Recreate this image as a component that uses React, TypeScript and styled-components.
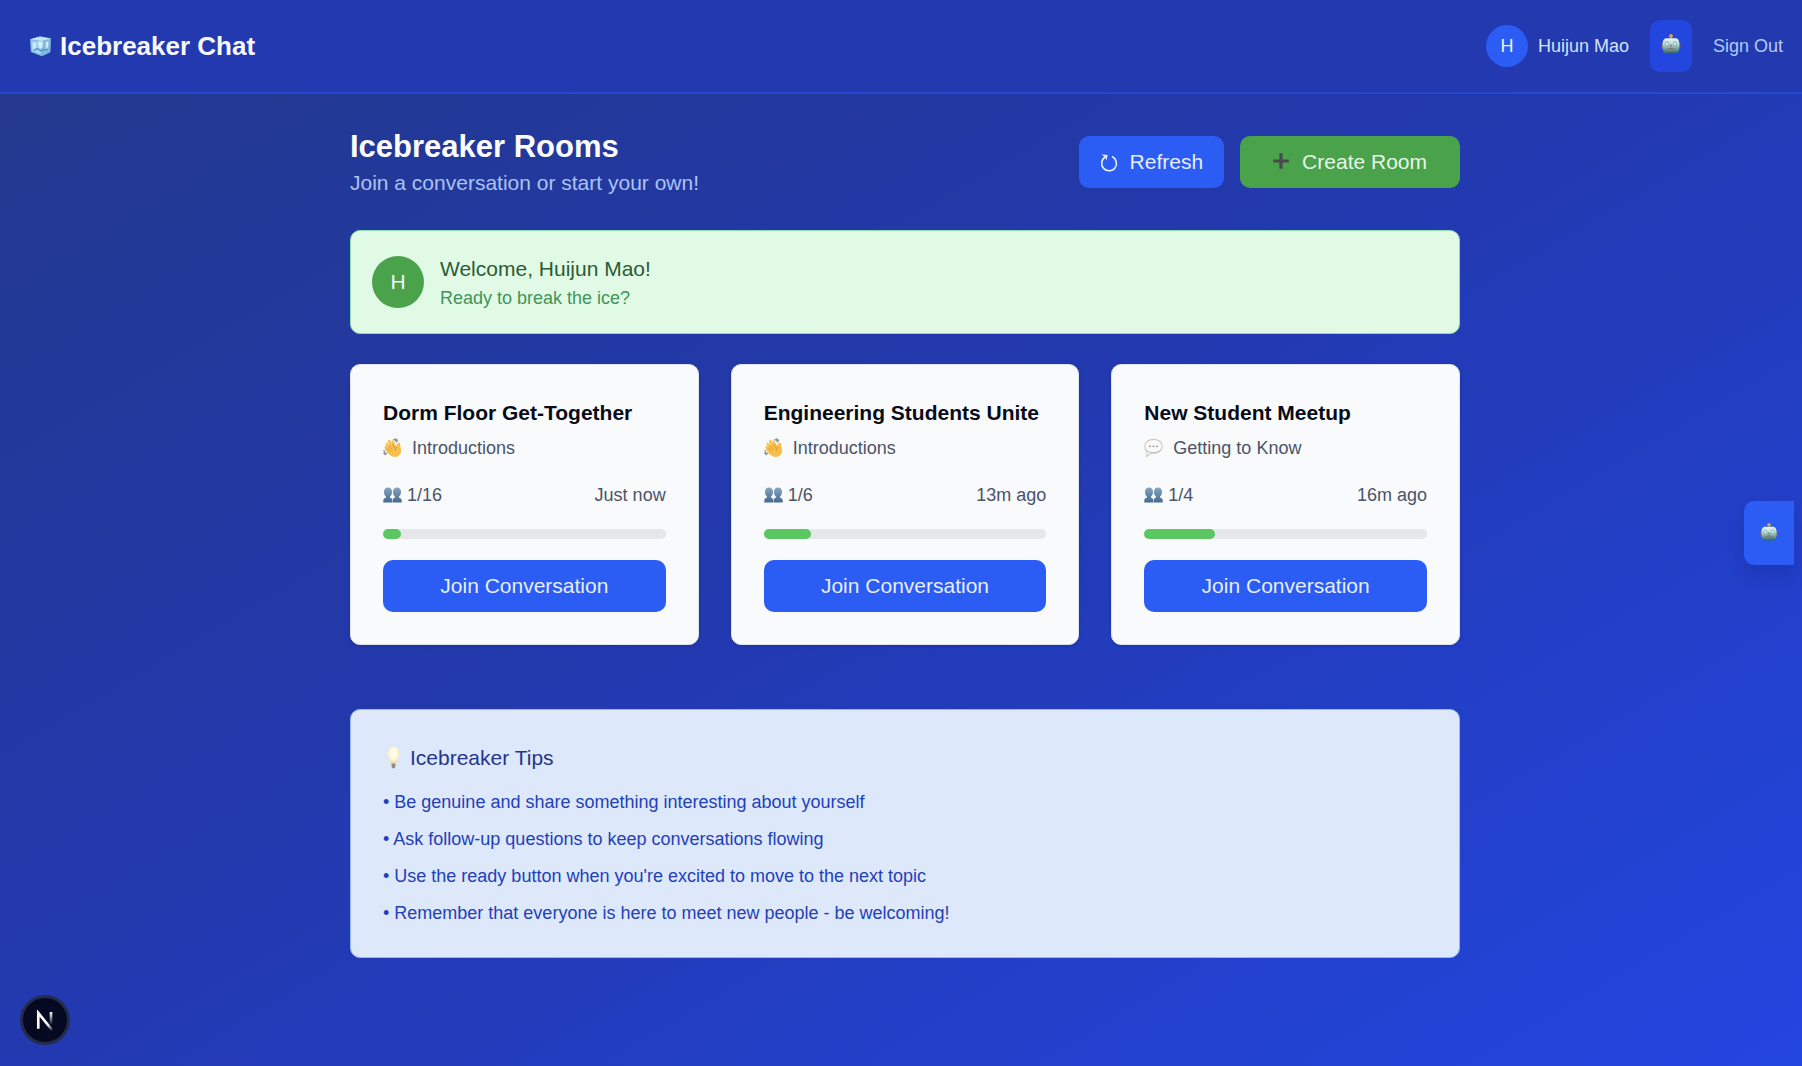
import React from "react";
import styled, { createGlobalStyle } from "styled-components";

const GlobalStyle = createGlobalStyle`
  *, *::before, *::after { box-sizing: border-box; }
  body {
    margin: 0;
    font-family: "Liberation Sans", Arial, Helvetica, sans-serif;
    font-size: 21px;
    line-height: 32px;
  }
  h1, h2, h3, p, ul { margin: 0; padding: 0; }
  button { font: inherit; border: 0; cursor: pointer; }
  svg { display: block; flex: none; }
`;

const Page = styled.div`
  min-height: 100vh;
  display: flex;
  flex-direction: column;
  background: linear-gradient(to bottom right, #23388a, #2239b1 50%, #2346e0);
`;

const TopBar = styled.header`
  display: flex;
  align-items: center;
  justify-content: space-between;
  padding: 20px 19px 20px 29px;
  background: #2239b0;
  border-bottom: 2px solid #2449cf;
`;

const Brand = styled.div`
  display: flex;
  align-items: center;
  gap: 8px;
  color: #f7f9ff;
  font-size: 26px;
  font-weight: 700;
`;

const Account = styled.div`
  display: flex;
  align-items: center;
  gap: 21px;
  font-size: 18px;
`;

const User = styled.div`
  display: flex;
  align-items: center;
  gap: 10px;
  color: #d5e1fc;
`;

const Avatar = styled.span<{ $size: number; $color: string }>`
  display: flex;
  align-items: center;
  justify-content: center;
  flex: none;
  width: ${(p) => p.$size}px;
  height: ${(p) => p.$size}px;
  border-radius: 50%;
  background: ${(p) => p.$color};
  color: #eef3ff;
`;

const BotButton = styled.button`
  display: flex;
  align-items: center;
  justify-content: center;
  width: 42px;
  height: 52px;
  padding: 0 0 4px;
  border-radius: 10px;
  background: #2346de;
`;

const SignOut = styled.button`
  padding: 0;
  background: none;
  color: #b4caf8;
`;

const Main = styled.main`
  padding: 32px 0 32px 8px;
`;

const Container = styled.div`
  max-width: 1110px;
  margin: 0 auto;
`;

const Heading = styled.div`
  display: flex;
  align-items: center;
  justify-content: space-between;
  margin-bottom: 32px;
`;

const Title = styled.h1`
  color: #fcfdff;
  font-size: 31px;
  line-height: 42px;
`;

const Subtitle = styled.p`
  color: #abc3f5;
  line-height: 30px;
`;

const Actions = styled.div`
  display: flex;
  gap: 16px;
`;

const Button = styled.button<{ $tone?: "green"; $padding?: number; $gap?: number }>`
  display: flex;
  align-items: center;
  justify-content: center;
  gap: ${(p) => p.$gap ?? 0}px;
  height: 52px;
  padding: 0 ${(p) => p.$padding ?? 21}px;
  border-radius: 10px;
  background: ${(p) => (p.$tone === "green" ? "#4aa24a" : "#2b5cf4")};
  color: ${(p) => (p.$tone === "green" ? "#e6f7e8" : "#e6eeff")};
`;

const Welcome = styled.section`
  display: flex;
  align-items: center;
  gap: 16px;
  margin-bottom: 30px;
  padding: 22px 21px;
  border: 1px solid #8fdcae;
  border-radius: 10px;
  background: #e0fae6;
  color: #2c5b34;
`;

const Small = styled.p<{ $color: string }>`
  color: ${(p) => p.$color};
  font-size: 18px;
  line-height: 26px;
`;

const Rooms = styled.section`
  display: grid;
  grid-template-columns: repeat(3, 1fr);
  gap: 32px;
  margin-bottom: 64px;
`;

const Card = styled.article`
  display: flex;
  flex-direction: column;
  gap: 21px;
  padding: 32px;
  border: 1px solid #dfe4ee;
  border-radius: 10px;
  background: #f9fafc;
  box-shadow: 0 1px 3px rgba(10, 20, 90, 0.2);
`;

const RoomName = styled.h2`
  margin-bottom: 6px;
  color: #080b18;
  font-size: 21px;
`;

const Line = styled.div<{ $gap: number }>`
  display: flex;
  align-items: center;
  gap: ${(p) => p.$gap}px;
`;

const Meta = styled.div`
  display: flex;
  justify-content: space-between;
`;

const Track = styled.div`
  height: 10px;
  border-radius: 5px;
  background: #e5e7eb;
`;

const Fill = styled.div`
  height: 100%;
  border-radius: 5px;
  background: #5bc760;
`;

const Tips = styled.section`
  padding: 32px;
  border: 1px solid #93b8fa;
  border-radius: 10px;
  background: #dde8fb;
`;

const TipsTitle = styled.h3`
  display: flex;
  align-items: center;
  gap: 6px;
  margin-bottom: 16px;
  color: #24368a;
  font-size: 21px;
  font-weight: 400;
`;

const TipList = styled.ul`
  display: flex;
  flex-direction: column;
  gap: 13px;
  list-style: none;
  color: #2340b8;
  font-size: 18px;
  line-height: 24px;
`;

const SideTab = styled.button`
  position: fixed;
  top: 50%;
  right: 8px;
  transform: translateY(-50%);
  display: flex;
  align-items: center;
  justify-content: center;
  width: 50px;
  height: 64px;
  padding: 0 0 2px;
  border-radius: 10px 0 0 10px;
  background: #2b5cf4;
  box-shadow: 0 10px 16px rgba(15, 25, 120, 0.22);
`;

const DevBadge = styled.button`
  position: fixed;
  left: 20px;
  bottom: 21px;
  display: flex;
  align-items: center;
  justify-content: center;
  width: 50px;
  height: 50px;
  padding: 0;
  border: 3px solid #252b4a;
  border-radius: 50%;
  background: #050a22;
`;

const IceIcon = () => (
  <svg width="23" height="21" viewBox="0 0 23 21" aria-hidden="true">
    <path d="M1 3.200 11 .6l11 2-.6 13.600L13 20.200 1.800 16z" fill="#7db6dd" />
    <path d="M1 3.200 11 .6l11 2L12.500 5z" fill="#c3e6f2" />
    <path d="M2.200 4.600 12 6.300v12.500L3 15.200z" fill="#a5d4ee" />
    <path d="M13 6.300l8-2.600-.5 11.600-7.500 3.700z" fill="#82bbdf" />
    <path d="M4 6.500l2.500.5v5l-2 1.500zM9 5.500h5l-.6 6-3 1.500zM17 6l2.500-1-.3 6-2.400 1.500z" fill="#dcf4fb" opacity=".85" />
    <path d="M4.500 14.500l4-2 3.500 2.500 3-1.500 4 .5" fill="none" stroke="#4c8fc4" strokeWidth="1.200" />
  </svg>
);

const BotIcon = ({ size = 20 }: { size?: number }) => (
  <svg width={size} height={size} viewBox="0 0 20 20" aria-hidden="true">
    <defs>
      <linearGradient id="botFace" x1="0" y1="0" x2="0" y2="1">
        <stop offset="0" stopColor="#f3f5ee" />
        <stop offset=".35" stopColor="#c6dad4" />
        <stop offset=".7" stopColor="#71a09f" />
        <stop offset="1" stopColor="#2f5f66" />
      </linearGradient>
    </defs>
    <path d="M9.200 2.500h1.600v2.500H9.200z" fill="#8c7a6a" />
    <circle cx="10" cy="2" r="1.900" fill="#e2a044" />
    <rect x=".5" y="9" width="2.300" height="5.500" rx="1.100" fill="#8e5146" />
    <rect x="17.200" y="9" width="2.300" height="5.500" rx="1.100" fill="#8e5146" />
    <path d="M5.200 4.200h9.600c2.300.2 3.700 2.600 3.700 6.300 0 4.900-.9 9-3.300 9H4.800c-2.400 0-3.300-4.100-3.300-9 0-3.700 1.400-6.100 3.700-6.300z" fill="url(#botFace)" />
    <circle cx="6" cy="9.600" r="2.300" fill="#7fc4c6" />
    <circle cx="14" cy="9.600" r="2.300" fill="#7fc4c6" />
    <circle cx="6" cy="9.600" r="1.200" fill="#d4f6f4" />
    <circle cx="14" cy="9.600" r="1.200" fill="#d4f6f4" />
    <path d="M10 10.200l1.500 2.400h-3z" fill="#b9604f" />
    <path d="M6.500 15.500c1.500-1.600 5.500-1.600 7 0" fill="none" stroke="#8a6a62" strokeWidth="1" />
  </svg>
);

const RefreshIcon = () => (
  <svg width="18" height="22" viewBox="0 0 18 22" aria-hidden="true">
    <path d="M12 5.600A7.400 7.400 0 1 1 5.300 6" fill="none" stroke="#e6eeff" strokeWidth="1.600" />
    <path d="M1.400 3.400l6.300.5-1.200 5.700-1.200-3.300z" fill="#e6eeff" />
  </svg>
);

const PlusIcon = () => (
  <svg width="16" height="22" viewBox="0 0 16 22" aria-hidden="true">
    <path d="M6.400 2.200h3.200v6.200h6.200v3.200H9.600v6.200H6.400v-6.200H.2V8.400h6.200z" fill="#46494f" />
  </svg>
);

const WaveIcon = () => (
  <svg width="19" height="20" viewBox="0 0 19 20" aria-hidden="true">
    <g fill="none" stroke="#8d949c" strokeWidth="1.300" strokeLinecap="round">
      <path d="M10.800 1.500c1.500.4 2.400 1.300 2.800 2.600M12.500.8c.9.4 1.700 1 2.100 2M1 12.500c.3 1.600 1.100 2.600 2.500 3.100M.8 15c.4.8.9 1.300 1.700 1.600" />
    </g>
    <path d="M5.200 15.800C3 13.500 1.700 10.800 1.500 9.300c-.2-1.200 1.200-1.700 1.700-.8l1 1.500L2.700 6.200c-.5-1.400 1.300-2.200 2-1l1.500 2.700L5 3.300C4.700 1.900 6.500 1.300 7.200 2.500l2 3.900-.8-2.800c-.3-1.300 1.300-1.900 2-.7l3.200 5.700c.3-1.500.4-3.600 1.800-3.900 1.200-.3 1.900.4 1.800 1.600-.2 3 1.400 4.700.9 7.500-.5 2.700-2.700 5.200-6 5.200-2.800 0-5-1.200-6.900-3.200z" fill="#f6c04c" />
    <path d="M4.200 10l2.800 3.200M6.200 7.900l3 3.600M9.200 6.400l2.600 3.800M13.600 8.600c-.9 1-1.500 2.400-1.200 4" fill="none" stroke="#d9912c" strokeWidth=".8" strokeLinecap="round" />
  </svg>
);

const SpeechIcon = () => (
  <svg width="19" height="20" viewBox="0 0 19 20" aria-hidden="true">
    <path d="M9.500 1.300c5 0 8.700 2.700 8.700 6.900s-3.700 7-8.700 7c-.9 0-1.800-.1-2.600-.3-1 1.500-2.700 3.200-4.700 3.500.7-1.100 1-2.900.9-4.800C1.600 12.300.8 10.400.8 8.200c0-4.200 3.700-6.900 8.700-6.900z" fill="#fbfaf8" stroke="#cfccc8" strokeWidth="1.200" />
    <path d="M2 11.500c1.300 2 3.800 3.200 7.500 3.200 3.400 0 6-1.100 7.500-3.200" fill="none" stroke="#b4b0ac" strokeWidth=".8" />
    <g fill="#8b8783">
      <circle cx="6" cy="8.300" r=".9" />
      <circle cx="9.500" cy="8.300" r=".9" />
      <circle cx="13" cy="8.300" r=".9" />
    </g>
  </svg>
);

const PeopleIcon = () => (
  <svg width="19" height="16" viewBox="0 0 19 16" aria-hidden="true">
    <defs>
      <linearGradient id="people" x1="0" y1="0" x2="0" y2="1">
        <stop offset="0" stopColor="#86a5c1" />
        <stop offset="1" stopColor="#45698f" />
      </linearGradient>
    </defs>
    <path d="M5 .6c2.500 0 4 1.800 4 4.400 0 2-.8 3.600-2 4.500v1c1.200.5 2.300 1 2.300 3.100v1.800H.3v-1.800c0-2.100 1.400-2.600 2.700-3.100v-1C1.800 8.600 1 7 1 5 1 2.400 2.500.6 5 .6z" fill="url(#people)" />
    <path d="M14 .6c2.500 0 4 1.800 4 4.400 0 2-.8 3.600-2 4.500v1c1.300.5 2.700 1 2.700 3.100v1.800h-9v-1.800c0-2.100 1.100-2.600 2.300-3.100v-1c-1.200-.9-2-2.500-2-4.500 0-2.600 1.500-4.400 4-4.400z" fill="url(#people)" />
  </svg>
);

const BulbIcon = () => (
  <svg width="21" height="24" viewBox="0 0 21 24" aria-hidden="true">
    <defs>
      <radialGradient id="bulb" cx=".5" cy=".4" r=".6">
        <stop offset="0" stopColor="#fffef6" />
        <stop offset=".6" stopColor="#fdf7da" />
        <stop offset="1" stopColor="#ecd692" />
      </radialGradient>
    </defs>
    <path d="M10.500.8c3.800 0 6.300 2.700 6.300 6.200 0 4-2.900 6-3.700 10.500H7.900C7.100 13 4.200 11 4.200 7 4.200 3.500 6.700.8 10.500.8z" fill="url(#bulb)" />
    <path d="M8.400 17.200h4.200l-.4 4.300c-.2 1.500-3.200 1.500-3.400 0z" fill="#b5b0a4" />
    <path d="M8.700 19h3.600M8.900 21h3.200" stroke="#6b6860" strokeWidth=".9" />
  </svg>
);

const NextIcon = () => (
  <svg width="21" height="21" viewBox="0 0 16 16" fill="none" aria-hidden="true">
    <defs>
      <linearGradient id="nDiagonal" gradientUnits="userSpaceOnUse" x1="9.950" y1="11" x2="14" y2="15.500">
        <stop stopColor="#fff" />
        <stop offset="1" stopColor="#fff" stopOpacity="0" />
      </linearGradient>
      <linearGradient id="nStem" gradientUnits="userSpaceOnUse" x1="12" y1="1.500" x2="12" y2="11.500">
        <stop stopColor="#fff" />
        <stop offset="1" stopColor="#fff" stopOpacity="0" />
      </linearGradient>
    </defs>
    <path d="M13 15.200L2.500 2.200v12" stroke="url(#nDiagonal)" strokeWidth="2" />
    <path d="M12.200 1.500v11" stroke="url(#nStem)" strokeWidth="2" />
  </svg>
);

const rooms = [
  { name: "Dorm Floor Get-Together", topic: "Introductions", Icon: WaveIcon, people: 1, limit: 16, age: "Just now" },
  { name: "Engineering Students Unite", topic: "Introductions", Icon: WaveIcon, people: 1, limit: 6, age: "13m ago" },
  { name: "New Student Meetup", topic: "Getting to Know", Icon: SpeechIcon, people: 1, limit: 4, age: "16m ago" },
];

const tips = [
  "Be genuine and share something interesting about yourself",
  "Ask follow-up questions to keep conversations flowing",
  "Use the ready button when you're excited to move to the next topic",
  "Remember that everyone is here to meet new people - be welcoming!",
];

export default function App() {
  return (
    <Page>
      <GlobalStyle />
      <TopBar>
        <Brand>
          <IceIcon />
          Icebreaker Chat
        </Brand>
        <Account>
          <User>
            <Avatar $size={42} $color="#2b5cf4">H</Avatar>
            Huijun Mao
          </User>
          <BotButton aria-label="Assistant">
            <BotIcon />
          </BotButton>
          <SignOut>Sign Out</SignOut>
        </Account>
      </TopBar>

      <Main>
        <Container>
          <Heading>
            <div>
              <Title>Icebreaker Rooms</Title>
              <Subtitle>Join a conversation or start your own!</Subtitle>
            </div>
            <Actions>
              <Button $gap={12}>
                <RefreshIcon />
                Refresh
              </Button>
              <Button $tone="green" $padding={33} $gap={13}>
                <PlusIcon />
                Create Room
              </Button>
            </Actions>
          </Heading>

          <Welcome>
            <Avatar $size={52} $color="#4aa24a">H</Avatar>
            <div>
              <p>Welcome, Huijun Mao!</p>
              <Small $color="#43935a">Ready to break the ice?</Small>
            </div>
          </Welcome>

          <Rooms>
            {rooms.map(({ name, topic, Icon, people, limit, age }) => (
              <Card key={name}>
                <div>
                  <RoomName>{name}</RoomName>
                  <Line $gap={10}>
                    <Icon />
                    <Small $color="#4a5468">{topic}</Small>
                  </Line>
                </div>
                <Meta>
                  <Line $gap={5}>
                    <PeopleIcon />
                    <Small $color="#4a5468">{`${people}/${limit}`}</Small>
                  </Line>
                  <Small $color="#4a5468">{age}</Small>
                </Meta>
                <Track>
                  <Fill style={{ width: `${(people / limit) * 100}%` }} />
                </Track>
                <Button>Join Conversation</Button>
              </Card>
            ))}
          </Rooms>

          <Tips>
            <TipsTitle>
              <BulbIcon />
              Icebreaker Tips
            </TipsTitle>
            <TipList>
              {tips.map((tip) => (
                <li key={tip}>• {tip}</li>
              ))}
            </TipList>
          </Tips>
        </Container>
      </Main>

      <SideTab aria-label="Open assistant">
        <BotIcon size={18} />
      </SideTab>
      <DevBadge aria-label="Developer tools">
        <NextIcon />
      </DevBadge>
    </Page>
  );
}
